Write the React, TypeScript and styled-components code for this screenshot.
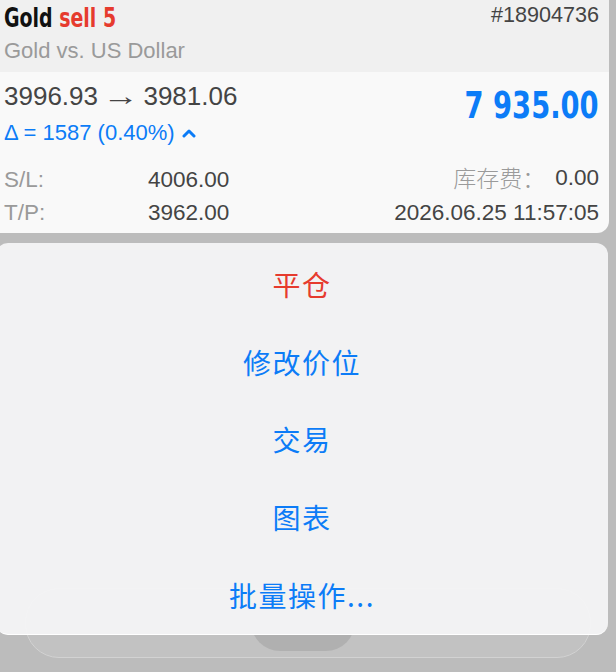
import React from "react";
import styled, { createGlobalStyle } from "styled-components";

const Global = createGlobalStyle`
  html, body { margin: 0; padding: 0; }
  body {
    width: 616px;
    height: 672px;
    overflow: hidden;
    background: #bcbcbc;
    font-family: "Liberation Sans", Arial, sans-serif;
  }
`;

const BLUE = "#0c7cf7";
const RED = "#e63b2e";

const Screen = styled.div`
  position: relative;
  width: 616px;
  height: 672px;
  background: #bcbcbc;
  overflow: hidden;
  display: flex;
  flex-direction: column;
  gap: 10px;
`;

const TabGhost = styled.div`
  position: absolute;
  left: 25px;
  right: 25px;
  top: 588px;
  height: 68px;
  border-radius: 34px;
  background: #c2c2c2;
  border: 1px solid #d2d2d2;
  z-index: 0;
`;

const TabBubble = styled.div`
  position: absolute;
  left: 225px;
  top: 4px;
  width: 104px;
  height: 58px;
  border-radius: 29px;
  background: #b0b0b0;
`;

const Card = styled.div`
  position: relative;
  z-index: 1;
  margin-left: -12px;
  width: 621px;
  border-radius: 0 0 12px 12px;
  background: #f9f9f9;
  overflow: hidden;
`;

const CardHeader = styled.div`
  height: 72px;
  background: #f0f0f0;
  padding: 0 10px 0 16px;
  display: grid;
  grid-template-columns: 1fr auto;
  grid-template-rows: 36px 1fr;
`;

const Title = styled.div`
  font-family: "DejaVu Sans Condensed", "DejaVu Sans", sans-serif;
  font-stretch: condensed;
  font-weight: bold;
  font-size: 27px;
  line-height: 36px;
  color: #111;
  transform: scaleX(0.78);
  transform-origin: left center;
  white-space: nowrap;
`;

const Red = styled.span`
  color: ${RED};
`;

const Ticket = styled.div`
  font-size: 21.6px;
  line-height: 30px;
  color: #444;
  text-align: right;
`;

const Subtitle = styled.div`
  grid-column: 1 / 3;
  font-size: 22px;
  line-height: 30px;
  color: #9a9a9a;
`;

const CardBody = styled.div`
  padding: 8px 10px 3px 16px;
  display: flex;
  flex-direction: column;
`;

const TopRow = styled.div`
  display: flex;
  justify-content: space-between;
  align-items: flex-start;
`;

const PriceCol = styled.div`
  display: flex;
  flex-direction: column;
`;

const Prices = styled.div`
  height: 32px;
  font-size: 26px;
  line-height: 32px;
  color: #444;
  white-space: nowrap;
`;

const Arrow = styled.span`
  display: inline-block;
  transform: scaleX(1.4);
  margin: 0 2.5px;
`;

const Delta = styled.div`
  font-size: 22px;
  line-height: 32px;
  color: ${BLUE};
  display: flex;
  align-items: center;
  gap: 7px;
  margin-top: 5px;
`;

const Profit = styled.div`
  font-family: "DejaVu Sans Condensed", "DejaVu Sans", sans-serif;
  font-stretch: condensed;
  font-weight: bold;
  font-size: 38px;
  line-height: 44px;
  color: ${BLUE};
  margin-top: 3px;
  transform: scaleX(0.8);
  transform-origin: right center;
  white-space: nowrap;
`;

const InfoRows = styled.div`
  display: flex;
  flex-direction: column;
  margin-top: 11px;
`;

const InfoRow = styled.div`
  display: grid;
  grid-template-columns: 144px 1fr auto;
  align-items: baseline;
  height: 35px;
  font-size: 22.5px;
  line-height: 35px;
  color: #444;
`;

const Label = styled.span`
  color: #9a9a9a;
`;

const RightCell = styled.span`
  text-align: right;
  display: flex;
  justify-content: flex-end;
  gap: 10px;
`;

const CJKLabel = styled.span`
  color: #9a9a9a;
  font-family: "Noto Sans CJK SC", sans-serif;
  font-weight: 300;
  font-size: 23px;
`;

const Sheet = styled.div`
  position: relative;
  z-index: 1;
  margin-left: -4px;
  width: 612px;
  height: 392px;
  background: rgba(244, 244, 245, 0.97);
  border-radius: 12px;
  border-bottom: 1px solid #ffffff;
  display: flex;
  flex-direction: column;
  padding-top: 2px;
  box-sizing: border-box;
`;

const Action = styled.div<{ $danger?: boolean }>`
  height: 78.5px;
  display: flex;
  align-items: center;
  justify-content: center;
  font-family: "Noto Sans CJK SC", sans-serif;
  font-size: 28px;
  letter-spacing: 1.5px;
  color: ${(p) => (p.$danger ? RED : BLUE)};
`;

const Chevron = () => (
  <svg width="14" height="10" viewBox="0 0 14 10">
    <path d="M2 8 L7 3 L12 8" fill="none" stroke={BLUE} strokeWidth="3" strokeLinecap="round" strokeLinejoin="round" />
  </svg>
);

export default function App() {
  return (
    <>
      <Global />
      <Screen>
        <TabGhost>
          <TabBubble />
        </TabGhost>
        <Card>
          <CardHeader>
            <Title>
              Gold <Red>sell 5</Red>
            </Title>
            <Ticket>#18904736</Ticket>
            <Subtitle>Gold vs. US Dollar</Subtitle>
          </CardHeader>
          <CardBody>
            <TopRow>
              <PriceCol>
                <Prices>
                  3996.93 <Arrow>→</Arrow> 3981.06
                </Prices>
                <Delta>
                  Δ = 1587 (0.40%) <Chevron />
                </Delta>
              </PriceCol>
              <Profit>7 935.00</Profit>
            </TopRow>
            <InfoRows>
              <InfoRow>
                <Label>S/L:</Label>
                <span>4006.00</span>
                <RightCell>
                  <CJKLabel>库存费：</CJKLabel>
                  <span>0.00</span>
                </RightCell>
              </InfoRow>
              <InfoRow>
                <Label>T/P:</Label>
                <span>3962.00</span>
                <RightCell>2026.06.25 11:57:05</RightCell>
              </InfoRow>
            </InfoRows>
          </CardBody>
        </Card>
        <Sheet>
          <Action $danger>平仓</Action>
          <Action>修改价位</Action>
          <Action>交易</Action>
          <Action>图表</Action>
          <Action>批量操作...</Action>
        </Sheet>
      </Screen>
    </>
  );
}
